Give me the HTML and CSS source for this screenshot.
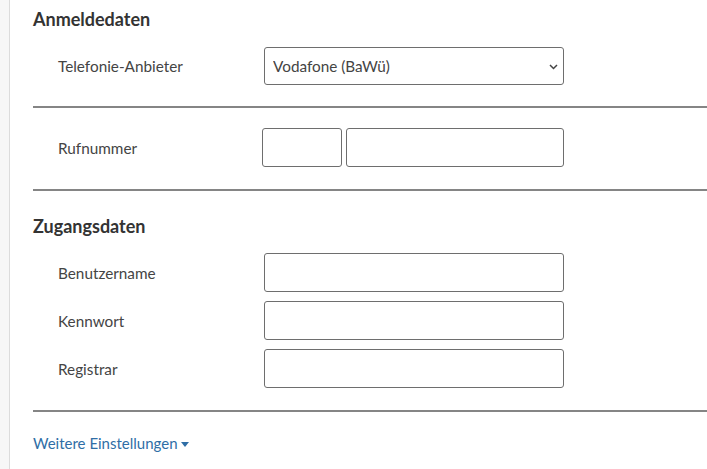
FILE: index.html
```html
<!DOCTYPE html>
<html lang="de">
<head>
<meta charset="utf-8">
<link rel="stylesheet" href="styles.css">
</head>
<body>
<div class="page">
  <div class="rail"></div>
  <main class="content">
    <section class="block first">
      <h2 class="heading">Anmeldedaten</h2>
      <div class="row">
        <label class="label">Telefonie-Anbieter</label>
        <div class="select-wrap">
          <select class="select"><option>Vodafone (BaWü)</option></select>
          <svg class="chev" width="9" height="6" viewBox="0 0 9 6"><path d="M1 1 L4.5 4.5 L8 1" fill="none" stroke="#444" stroke-width="1.5"/></svg>
        </div>
      </div>
    </section>
    <hr class="divider">
    <section class="block phone">
      <div class="row">
        <label class="label">Rufnummer</label>
        <div class="phone-fields">
          <input class="input prefix" type="text">
          <input class="input number" type="text">
        </div>
      </div>
    </section>
    <hr class="divider">
    <section class="block access">
      <h2 class="heading">Zugangsdaten</h2>
      <div class="rows">
        <div class="row">
          <label class="label">Benutzername</label>
          <input class="input wide" type="text">
        </div>
        <div class="row">
          <label class="label">Kennwort</label>
          <input class="input wide" type="text">
        </div>
        <div class="row">
          <label class="label">Registrar</label>
          <input class="input wide" type="text">
        </div>
      </div>
    </section>
    <hr class="divider">
    <a class="more" href="#">Weitere Einstellungen<svg class="tri" width="8" height="5" viewBox="0 0 8 5"><path d="M0 0 H8 L4 5 Z" fill="#2f6ea6"/></svg></a>
  </main>
</div>
</body>
</html>
```
FILE: styles.css
```css
html, body {
  margin: 0;
  padding: 0;
  background: #ffffff;
}
body {
  font-family: "Lato", "Open Sans", sans-serif;
  color: #444444;
}
.page {
  display: flex;
  min-height: 469px;
}
.rail {
  width: 9px;
  flex: none;
  background: #f7f7f7;
  border-right: 1px solid #dcdcdc;
}
.content {
  flex: 1;
  padding-left: 23px;
  padding-top: 9px;
}
.heading {
  margin: 0;
  font-size: 18px;
  line-height: 20px;
  font-weight: 700;
  color: #333333;
}
.block.first .heading { margin-bottom: 18px; }
.block.first { padding-bottom: 21px; }
.block.phone { padding: 20px 0 22px; }
.block.access { padding: 25px 0 22px; }
.block.access .heading { margin-bottom: 17px; }
.rows {
  display: flex;
  flex-direction: column;
  gap: 9px;
}
.row {
  display: flex;
  align-items: center;
}
.label {
  width: 231px;
  flex: none;
  padding-left: 25px;
  box-sizing: border-box;
  font-size: 15.3px;
  color: #444444;
}
.divider {
  margin: 0;
  border: 0;
  height: 2px;
  background: #858585;
}
.select-wrap {
  position: relative;
  width: 300px;
  height: 38px;
}
.select {
  appearance: none;
  -webkit-appearance: none;
  width: 100%;
  height: 100%;
  box-sizing: border-box;
  border: 1px solid #6e6e6e;
  border-radius: 3px;
  background: #ffffff;
  padding: 0 8px;
  font-family: "Lato", "Open Sans", sans-serif;
  font-size: 15.3px;
  color: #444444;
}
.chev {
  position: absolute;
  right: 6px;
  top: 17px;
}
.phone-fields {
  display: flex;
  gap: 4px;
  margin-left: -2px;
}
.input {
  box-sizing: border-box;
  height: 39px;
  border: 1px solid #6e6e6e;
  border-radius: 3px;
  background: #ffffff;
  margin: 0;
  padding: 0 8px;
  font-family: "Lato", "Open Sans", sans-serif;
  font-size: 15px;
}
.input.prefix { width: 80px; }
.input.number { width: 218px; }
.input.wide { width: 300px; }
.more {
  display: inline-flex;
  align-items: center;
  gap: 3px;
  margin-top: 21px;
  font-size: 15px;
  line-height: 20px;
  color: #2f6ea6;
  text-decoration: none;
}
.tri { margin-top: 2px; }
```
